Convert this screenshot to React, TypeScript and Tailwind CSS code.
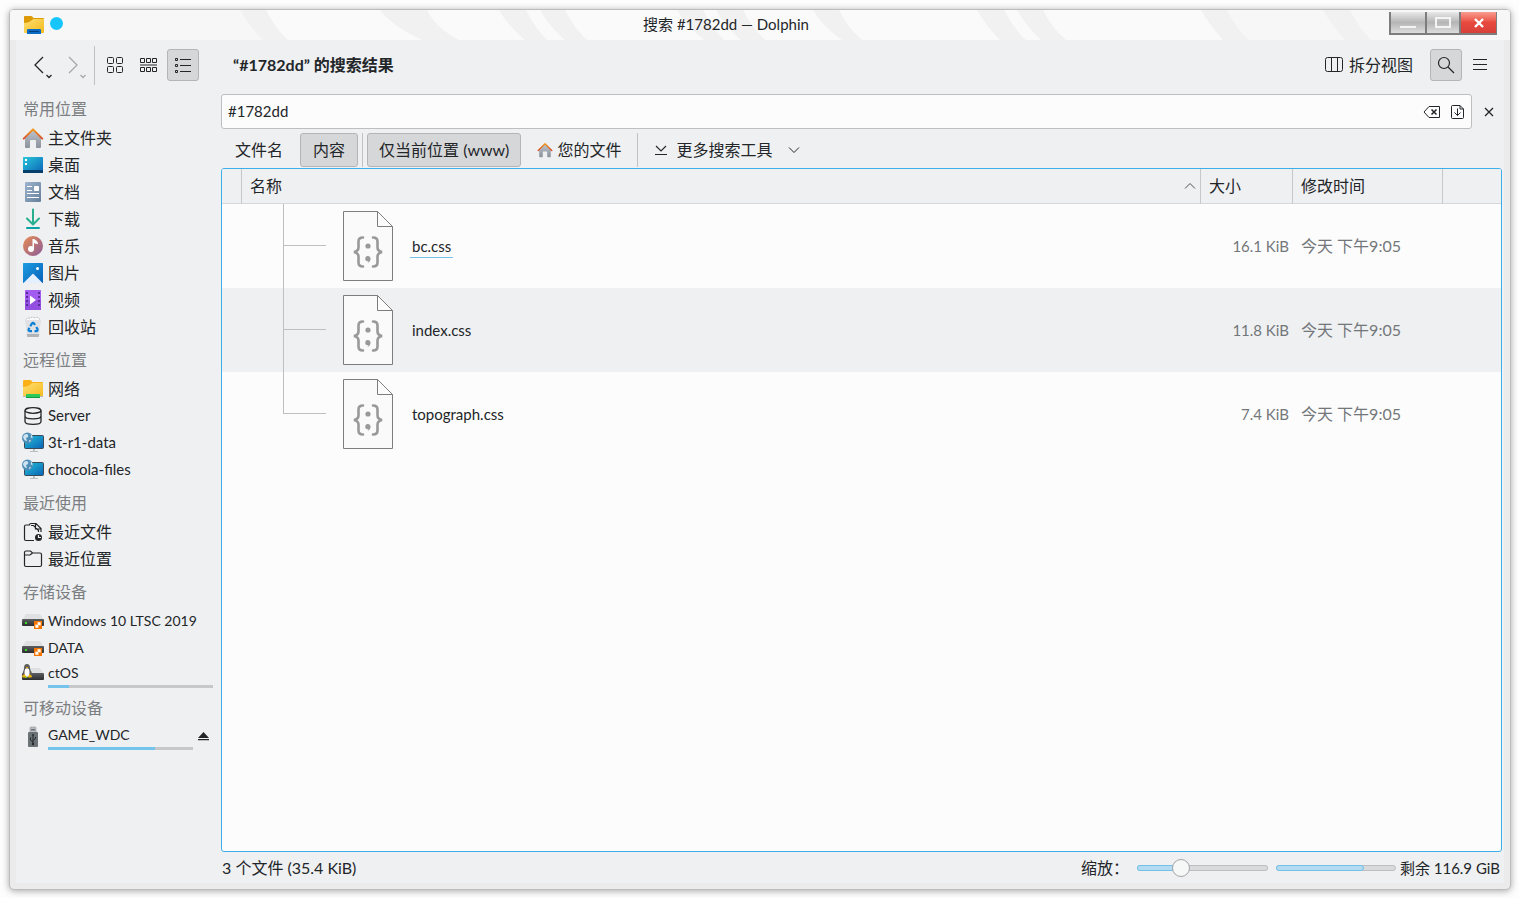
import { ReactNode, useState } from "react";
import clsx from "clsx";

const HomeIcon = ({ className = "size-[22px]" }: { className?: string }) => (
  <svg viewBox="0 0 22 22" className={className}>
    <defs>
      <linearGradient id="homeWall" x1="0" y1="0" x2="0" y2="1">
        <stop offset="0" stopColor="#bdc3cc" />
        <stop offset="1" stopColor="#8b929d" />
      </linearGradient>
      <linearGradient id="homeRoof" x1="0" y1="0" x2="0" y2="1">
        <stop offset="0" stopColor="#f09a1a" />
        <stop offset="1" stopColor="#d9512c" />
      </linearGradient>
    </defs>
    <path d="M11 3 3 11v9q0 1 1 1h3q1 0 1-1v-6q0-1 1-1h4q1 0 1 1v6q0 1 1 1h3q1 0 1-1v-9z" fill="url(#homeWall)" />
    <path d="M1.7 11.6 11 2.4l9.3 9.2" fill="none" stroke="url(#homeRoof)" strokeWidth="2" strokeLinecap="round" strokeLinejoin="round" />
  </svg>
);

const DesktopIcon = () => (
  <svg viewBox="0 0 22 22" className="size-[22px]">
    <defs>
      <linearGradient id="desk" x1="0" y1="0" x2="1" y2="1">
        <stop offset="0" stopColor="#2ac6da" />
        <stop offset="1" stopColor="#0a64b8" />
      </linearGradient>
    </defs>
    <rect x="1" y="3" width="20" height="16" rx=".5" fill="url(#desk)" />
    <path d="M1 16h20v3H1z" fill="#053f6b" />
    <path d="M3 5h2v2H3zM3 9h2v2H3z" fill="#fff" />
  </svg>
);

const DocumentIcon = () => (
  <svg viewBox="0 0 22 22" className="size-[22px]">
    <defs>
      <linearGradient id="doc" x1="0" y1="0" x2="1" y2="1">
        <stop offset="0" stopColor="#9fb4cd" />
        <stop offset="1" stopColor="#647f9c" />
      </linearGradient>
    </defs>
    <rect x="3" y="1" width="16" height="20" rx="1" fill="url(#doc)" />
    <path d="M5 5.500h5M5 9.500h5M5 12.500h12M5 16.500h12" stroke="#fff" />
    <rect x="12" y="5" width="5" height="5" rx=".7" fill="#fff" />
  </svg>
);

const DownloadIcon = () => (
  <svg viewBox="0 0 22 22" className="size-[22px]" fill="none" strokeWidth="2" strokeLinecap="round">
    <path d="M11 1.500v14M5 10.500l6 6 6-6" stroke="#27ae8e" strokeLinejoin="round" />
    <path d="M5 20h12" stroke="#0aa3a3" />
  </svg>
);

const MusicIcon = () => (
  <svg viewBox="0 0 22 22" className="size-[22px]">
    <defs>
      <linearGradient id="music" x1="0" y1="0" x2="1" y2="1">
        <stop offset="0" stopColor="#ea8c50" />
        <stop offset="1" stopColor="#8a5c9c" />
      </linearGradient>
    </defs>
    <circle cx="11" cy="11" r="10" fill="url(#music)" />
    <circle cx="9" cy="14" r="3" fill="#fff" />
    <path d="M10.500 4v10H12V8c1.500 1 3 1 4 1.200C16 7 14.500 5 12 4z" fill="#fff" />
  </svg>
);

const PictureIcon = () => (
  <svg viewBox="0 0 22 22" className="size-[22px]">
    <defs>
      <linearGradient id="pic" x1="0" y1="0" x2="1" y2="1">
        <stop offset="0" stopColor="#1f9de2" />
        <stop offset="1" stopColor="#0660b8" />
      </linearGradient>
    </defs>
    <rect x="1" y="1" width="20" height="20" rx=".5" fill="url(#pic)" />
    <path d="m1.500 21 9-9q.5-.4 1 0l9 9z" fill="#e4efff" />
    <circle cx="15.500" cy="6.500" r="1.500" fill="#fff" />
  </svg>
);

const VideoIcon = () => (
  <svg viewBox="0 0 22 22" className="size-[22px]">
    <rect x="3" y="1" width="16" height="20" rx=".5" fill="#a35cf0" />
    <path d="M3 11h16v10H3z" fill="#9350e0" />
    <path d="M4 3h2v2H4zM4 7h2v2H4zM4 11h2v2H4zM4 15h2v2H4zM16 3h2v2h-2zM16 7h2v2h-2zM16 11h2v2h-2zM16 15h2v2h-2z" fill="#5a2d9a" />
    <path d="M8 6.500v9l6-4.500z" fill="#fff" />
  </svg>
);

const TrashIcon = () => (
  <svg viewBox="0 0 22 22" className="size-[22px]">
    <path d="M3 4h16l-2 16H5z" fill="#dfe1e4" />
    <path d="M4.800 18h12.400l-.4 3H5.200z" fill="#b0b4b8" />
    <path d="M4 3.500 6 1.500l2 1 2-1.500 3 1 2-1 3 2.500" fill="#fff" stroke="#b8bbbf" strokeDasharray="2 1" />
    <g fill="none" stroke="#0a7fd8" strokeWidth="2.200">
      <path d="m8.300 10.300 1.500-2.600q1.200-1.500 2.400 0l.8 1.300" />
      <path d="m14.300 11 1.200 2.200q.4 1.800-1.300 2h-1.700" />
      <path d="M10 15.200H7.800q-1.800-.3-1.100-2l.8-1.400" />
    </g>
  </svg>
);

// folder with a coloured plate below it, blue for the app and green for the network
const FolderIcon = ({ network }: { network?: boolean }) => (
  <svg viewBox="0 0 22 22" className="size-[22px]">
    <defs>
      <linearGradient id="folder" x1="0" y1="0" x2="1" y2="1">
        <stop offset="0" stopColor="#ffdf72" />
        <stop offset="1" stopColor="#f4b91c" />
      </linearGradient>
    </defs>
    <path d="M1 3q0-1 1-1h6q1 0 1.500.8L10.500 4H20q1 0 1 1v5H1z" fill={network ? "#fbb117" : "#dc9a06"} />
    <path d="M1 9q5 0 8-3 1-1 2-1h10v13q0 1-1 1H2q-1 0-1-1z" fill="url(#folder)" />
    {network ? (
      <>
        <path d="M1 18.500h20" stroke="#b5babd" />
        <rect x="4" y="16" width="14" height="4" rx="1" fill="#2bc95a" />
        <path d="M4 19.500h14" stroke="#159a3c" />
      </>
    ) : (
      <>
        <path d="M4 16q0-1 1-1h12q1 0 1 1v4H4z" fill="#0b6cc4" />
        <path d="M6 17.500h10" stroke="#053f80" />
      </>
    )}
  </svg>
);

const DatabaseIcon = () => (
  <svg viewBox="0 0 22 22" className="size-[22px]" fill="none" stroke="#232629" strokeWidth="1.300">
    <ellipse cx="11" cy="5.500" rx="8" ry="2.800" />
    <path d="M3 5.500v11c0 3.800 16 3.800 16 0v-11M3 11c0 3.800 16 3.800 16 0" />
  </svg>
);

const RemoteIcon = () => (
  <svg viewBox="0 0 22 22" className="size-[22px]">
    <defs>
      <linearGradient id="remote" x1="0" y1="0" x2="1" y2="1">
        <stop offset="0" stopColor="#22c3d8" />
        <stop offset="1" stopColor="#0a61b6" />
      </linearGradient>
    </defs>
    <rect x="2.500" y="3.500" width="19" height="13" rx="1" fill="url(#remote)" stroke="#3b4a58" />
    <path d="M11 17h2v2h3v1H8v-1h3z" fill="#b9bec2" />
    <circle cx="5.500" cy="6" r="5.500" fill="#4d8fb8" />
    <path d="M2 3q3-2 4 0t-2 3l1 3Q2 9 1 5zM8 1.500q2 2 .5 3.500l2 1.500Q11 4 9 2zM7 8l2 .5-1.500 2z" fill="#cfe4ee" />
  </svg>
);

const RecentFilesIcon = () => (
  <svg viewBox="0 0 22 22" className="size-[22px]" fill="none" stroke="#232629" strokeWidth="1.200">
    <path d="M12 19.500H4q-1.500 0-1.500-1.500V5.500Q2.500 4 4 4h4" />
    <path d="M7.500 4Q7.500 2.500 9 2.500h5l5 5V11M13.500 3v5h5.500M9 4.500h2.500l5 5V11" />
    <circle cx="16.500" cy="16.500" r="3.500" fill="#232629" stroke="none" />
    <path d="M16.500 14v2.500H19" stroke="#eff0f1" />
  </svg>
);

const RecentPlacesIcon = () => (
  <svg viewBox="0 0 22 22" className="size-[22px]" fill="none" stroke="#232629" strokeWidth="1.200">
    <path d="M2.500 4.500q0-1.500 1.500-1.500h4.500l2 2H18q1.500 0 1.500 1.500V17q0 1.500-1.500 1.500H4q-1.500 0-1.500-1.500zM2.500 7H8l2.500-2" />
  </svg>
);

const DriveIcon = ({ kind }: { kind: "link" | "linux" }) => (
  <svg viewBox="0 0 22 22" className="size-[22px]">
    <defs>
      <linearGradient id="drive" x1="0" y1="0" x2="0" y2="1">
        <stop offset="0" stopColor="#5c5f62" />
        <stop offset="1" stopColor="#2b2d2f" />
      </linearGradient>
    </defs>
    <path d="M4 4h14l4 6H0z" fill="#dfe0e2" />
    <rect x="0" y="9" width="22" height="7" rx="1" fill="url(#drive)" />
    <path d="M3 12h2v2H3z" fill="#33e01c" />
    {kind === "link" ? (
      <>
        <rect x="12" y="11" width="8" height="8" fill="#f67400" />
        <path d="m14 17 4-4M15.500 13H18v2.500M14 14.500V17h2.500" fill="none" stroke="#fff" strokeWidth="1.300" />
      </>
    ) : (
      <>
        <path d="M2 4q0-4 3-4t3 4q0 2 1.500 4 1 4-1.500 5H2.500q-2.500-1-1.500-5Q2 6 2 4z" fill="#5b5b58" />
        <ellipse cx="5" cy="8.500" rx="2.500" ry="4.300" fill="#fff" />
        <path d="m3.700 3.500 1.300-.7 1.300.7L5 4.500z" fill="#e9a800" />
        <path d="m0 12 2.500-2 2 3.500h-4zM10 12l-2.500-2-2 3.500h4z" fill="#eab308" />
      </>
    )}
  </svg>
);

const UsbIcon = () => (
  <svg viewBox="0 0 22 22" className="size-[22px]">
    <rect x="8" y="1" width="6" height="6" rx="1" fill="#b9bdc1" stroke="#8c9094" strokeWidth=".6" />
    <path d="M9.500 3h1v1.500h-1zM11.500 3h1v1.500h-1z" fill="#232629" />
    <rect x="6" y="6" width="10" height="15" rx="1" fill="#6b7276" />
    <path d="M11 8.500v9.500M11 16l-2.500-2v-2.500M11 14.500l2.500-2v-1.500" fill="none" stroke="#23282b" />
    <path d="M11 7.500 9.800 9.500h2.400z" fill="#23282b" />
    <circle cx="11" cy="18" r="1.200" fill="#23282b" />
  </svg>
);

const CssFileIcon = () => (
  <svg viewBox="0 0 50 70" className="h-[70px] w-[50px] shrink-0" fill="none">
    <path d="M.5.500h34l15 15v54H.5z" fill="#fafafa" stroke="#7d7d7d" />
    <path d="M34.500.500v15h15z" fill="#fcfcfc" stroke="#7d7d7d" />
    <g stroke="#999" strokeWidth="2.600" strokeLinecap="round">
      <path d="M20 26.500q-4.500 0-4.500 4v6q0 3.500-4.500 4.500 4.500 1 4.500 4.500v6q0 4 4.500 4" />
      <path d="M30 26.500q4.500 0 4.500 4v6q0 3.500 4.500 4.500-4.500 1-4.500 4.500v6q0 4-4.500 4" />
    </g>
    <circle cx="25" cy="35" r="2.600" fill="#999" />
    <path d="M25 45a2.600 2.600 0 1 0-.3 5.200q.6 0 .8-.2-.2 1.200-1 2 3-1.200 3.100-4.500A2.600 2.600 0 0 0 25 45z" fill="#999" />
  </svg>
);

type Place = { name: string; icon: ReactNode; used?: number; eject?: boolean };

const places: { title: string; devices?: boolean; items: Place[] }[] = [
  {
    title: "常用位置",
    items: [
      { name: "主文件夹", icon: <HomeIcon /> },
      { name: "桌面", icon: <DesktopIcon /> },
      { name: "文档", icon: <DocumentIcon /> },
      { name: "下载", icon: <DownloadIcon /> },
      { name: "音乐", icon: <MusicIcon /> },
      { name: "图片", icon: <PictureIcon /> },
      { name: "视频", icon: <VideoIcon /> },
      { name: "回收站", icon: <TrashIcon /> },
    ],
  },
  {
    title: "远程位置",
    items: [
      { name: "网络", icon: <FolderIcon network /> },
      { name: "Server", icon: <DatabaseIcon /> },
      { name: "3t-r1-data", icon: <RemoteIcon /> },
      { name: "chocola-files", icon: <RemoteIcon /> },
    ],
  },
  {
    title: "最近使用",
    items: [
      { name: "最近文件", icon: <RecentFilesIcon /> },
      { name: "最近位置", icon: <RecentPlacesIcon /> },
    ],
  },
  {
    title: "存储设备",
    devices: true,
    items: [
      { name: "Windows 10 LTSC 2019", icon: <DriveIcon kind="link" /> },
      { name: "DATA", icon: <DriveIcon kind="link" /> },
      { name: "ctOS", icon: <DriveIcon kind="linux" />, used: 13 },
    ],
  },
  {
    title: "可移动设备",
    devices: true,
    items: [{ name: "GAME_WDC", icon: <UsbIcon />, used: 74, eject: true }],
  },
];

const files = [
  { name: "bc.css", size: "16.1 KiB", time: "今天 下午9:05" },
  { name: "index.css", size: "11.8 KiB", time: "今天 下午9:05" },
  { name: "topograph.css", size: "7.4 KiB", time: "今天 下午9:05" },
];

const isLatin = (s: string) => /^[\x20-\x7e]+$/.test(s);

function TitleBar() {
  return (
    <header className="relative flex h-[30px] shrink-0 items-center overflow-hidden rounded-t bg-[#fafafa] pr-[13px] pl-[13px]">
      <svg viewBox="0 0 1500 30" preserveAspectRatio="none" className="absolute inset-0 h-full w-full" fill="#f1f1f1">
        <path d="M0 0h230q12 16 23 30H0z" fill="#f7f7f7" />
        <path d="M1217 0h283v30h-261Q1226 16 1217 0z" fill="#f7f7f7" />
        <path d="M230 0h26q9 18 22 30h-25Q239 16 230 0zM370 0h47q9 18 32 30h-37Q382 16 370 0zM489 0h27q9 18 21 30h-22Q498 16 489 0zM530 0h25q9 18 22 30h-22Q539 16 530 0zM667 0h26q9 18 21 30h-20Q676 16 667 0zM706 0h27q9 18 22 30h-24Q715 16 706 0zM803 0h26q9 18 23 30h-20Q812 16 803 0zM967 0h27q9 18 22 30h-26Q976 16 967 0zM1007 0h26q9 18 23 30h-25Q1016 16 1007 0zM1191 0h26q9 18 22 30h-26Q1200 16 1191 0zM1313 0h27q9 18 21 30h-26Q1322 16 1313 0z" />
      </svg>
      <span className="relative">
        <FolderIcon />
      </span>
      <span className="relative mb-1 ml-[5px] size-[13px] rounded-full bg-[#16c5fb]" />
      <h1 className="relative flex-1 pb-[2px] text-center text-[15px]">搜索 #1782dd — Dolphin</h1>
      <div className="relative mb-[5px] flex h-[23px] self-end border-b-2 border-l-2 border-[#7d7d7d]">
        <button aria-label="最小化" className="flex w-9 items-end justify-center border-r-2 border-[#7d7d7d] bg-linear-to-b from-[#e8e8e8] via-[#b5b5b5] to-[#ddd] pb-[5px]">
          <span className="h-[2px] w-4 bg-[#f4f4f4]" />
        </button>
        <button aria-label="最大化" className="flex w-[34px] items-center justify-center border-r-2 border-[#7d7d7d] bg-linear-to-b from-[#e8e8e8] via-[#b5b5b5] to-[#ddd]">
          <span className="h-[11px] w-4 border-2 border-[#f4f4f4]" />
        </button>
        <button aria-label="关闭" className="flex w-9 items-center justify-center border-r border-[#7d7d7d] bg-linear-to-b from-[#f99a90] via-[#e8493e] to-[#d8403a]">
          <svg viewBox="0 0 10 10" className="size-[10px]" stroke="#fff" strokeWidth="2.400">
            <path d="m1 1 8 8M9 1 1 9" />
          </svg>
        </button>
      </div>
    </header>
  );
}

function Toolbar() {
  return (
    <div className="flex h-[50px] shrink-0 items-center pr-[6px] pl-2">
      <button aria-label="后退">
        <svg viewBox="0 0 34 32" className="h-8 w-[34px]" fill="none" stroke="#232629" strokeWidth="1.300">
          <path d="m19 8-8 8 8 8M22.500 26l2.500 2.500 2.500-2.500" />
        </svg>
      </button>
      <button aria-label="前进" disabled>
        <svg viewBox="0 0 34 32" className="h-8 w-[34px]" fill="none" stroke="#a6a8aa" strokeWidth="1.300">
          <path d="m11 8 8 8-8 8M22.500 26l2.500 2.500 2.500-2.500" />
        </svg>
      </button>
      <span className="mr-1 ml-[2px] h-[39px] w-px bg-[#bfc1c3]" />
      <div className="flex gap-[2px]">
        <button aria-label="图标" className="flex size-8 items-center justify-center">
          <svg viewBox="0 0 16 16" className="size-4" fill="none" stroke="#232629">
            <rect x=".5" y=".5" width="6" height="6" rx="1" />
            <rect x="9.500" y=".5" width="6" height="6" rx="1" />
            <rect x=".5" y="9.500" width="6" height="6" rx="1" />
            <rect x="9.500" y="9.500" width="6" height="6" rx="1" />
          </svg>
        </button>
        <button aria-label="紧凑" className="flex size-8 items-center justify-center">
          <svg viewBox="0 0 18 16" className="h-4 w-[18px]" fill="none" stroke="#232629">
            <path d="M.5 1.500h4v4h-4zM6.500 1.500h4v4h-4zM12.500 1.500h4v4h-4zM.5 10.500h4v4h-4zM6.500 10.500h4v4h-4zM12.500 10.500h4v4h-4zM0 8h17" />
          </svg>
        </button>
        <button aria-label="详细信息" className="flex size-8 items-center justify-center rounded-[3px] border border-[#b3b5b7] bg-[#d6d7d9]">
          <svg viewBox="0 0 16 16" className="size-4" fill="none" stroke="#232629">
            <path d="M.5 1.500h2v2h-2zM.5 7.500h2v2h-2zM.5 13.500h2v2h-2zM5 2.500h11M5 8.500h11M5 14.500h11" />
          </svg>
        </button>
      </div>
      <h2 className="ml-[34px] flex-1 text-base font-bold">“#1782dd” 的搜索结果</h2>
      <button className="flex items-center gap-[6px] text-base">
        <svg viewBox="0 0 18 16" className="h-4 w-[18px]" fill="none" stroke="#232629">
          <rect x=".5" y=".5" width="17" height="14" rx="2" />
          <path d="M6.500 1v14M12.500 1v14" />
        </svg>
        拆分视图
      </button>
      <button aria-label="搜索" className="ml-[17px] flex size-8 items-center justify-center rounded-[3px] border border-[#b3b5b7] bg-[#d6d7d9]">
        <svg viewBox="0 0 18 18" className="size-[18px]" fill="none" stroke="#232629" strokeWidth="1.200">
          <circle cx="7" cy="7" r="5.500" />
          <path d="m11 11 6 6" />
        </svg>
      </button>
      <button aria-label="菜单" className="flex h-8 w-9 items-center justify-center">
        <svg viewBox="0 0 14 12" className="h-3 w-[14px]" stroke="#232629">
          <path d="M0 .5h14M0 5.500h14M0 10.500h14" />
        </svg>
      </button>
    </div>
  );
}

function Sidebar() {
  return (
    <nav className="-mt-px w-[205px] shrink-0 text-base">
      {places.map((group) => (
        <section key={group.title}>
          <h3 className="flex h-[35px] items-center pt-1 pl-[7px] text-[#7c7f82]">{group.title}</h3>
          <ul className={clsx(group.devices && "text-sm")}>
            {group.items.map((p) => (
              <li key={p.name} className="flex h-[27px] items-center pr-2 pl-[6px]">
                <a href="#" className="flex h-full min-w-0 flex-1 items-center gap-1">
                  {p.icon}
                  <span className={clsx("flex h-full flex-1 flex-col whitespace-nowrap", isLatin(p.name) && !group.devices && "text-[15px]")}>
                    <span className={p.used ? "leading-6" : "leading-[27px]"}>{p.name}</span>
                    {p.used && (
                      <span className="h-[3px] bg-[#c5c7c9]">
                        <span className="block h-full bg-[#74c4ee]" style={{ width: `${p.used}%` }} />
                      </span>
                    )}
                  </span>
                </a>
                {p.eject && (
                  <button aria-label="弹出" className="flex w-5 items-center justify-end pr-1">
                    <svg viewBox="0 0 11 9" className="h-[9px] w-[11px] shrink-0" fill="#232629">
                      <path d="M5.500 0 11 6H0zM0 7h11v1.200H0z" />
                    </svg>
                  </button>
                )}
              </li>
            ))}
          </ul>
        </section>
      ))}
    </nav>
  );
}

function SearchPanel() {
  const [query, setQuery] = useState("#1782dd");

  return (
    <div className="pt-1">
      <div className="flex items-center">
        <div className="flex h-[35px] flex-1 items-center gap-2 rounded-[3px] border border-[#bcbec0] bg-[#fcfcfc] pr-[6px] pl-[6px]">
          <input aria-label="搜索内容" value={query} onChange={(e) => setQuery(e.target.value)} className="min-w-0 flex-1 bg-transparent text-[15px] outline-none" />
          <button aria-label="清除" onClick={() => setQuery("")}>
            <svg viewBox="0 0 18 16" className="h-4 w-[18px]" fill="none" stroke="#232629">
              <path d="M1 8 6 2.500h10.500v11H6z" />
              <path d="m8.500 5.500 5 5M13.500 5.500l-5 5" strokeWidth="1.600" />
            </svg>
          </button>
          <button aria-label="保存搜索">
            <svg viewBox="0 0 16 16" className="size-4" fill="none" stroke="#232629">
              <path d="M11 1.500H3.500q-1 0-1 1v11q0 1 1 1h10q1 0 1-1V5L11 1.500V5h3.500M8.500 4.500v7M5.500 8.500l3 3 3-3" />
            </svg>
          </button>
        </div>
        <button aria-label="关闭搜索" className="flex w-[30px] justify-center pl-1">
          <svg viewBox="0 0 10 10" className="size-[10px]" stroke="#232629" strokeWidth="1.300">
            <path d="m1 1 8 8M9 1 1 9" />
          </svg>
        </button>
      </div>
      <div className="my-1 flex h-[34px] items-center text-base whitespace-nowrap">
        <button className="h-full px-[14px]">文件名</button>
        <button className="ml-[3px] h-full rounded-[3px] border border-[#b3b5b7] bg-[#d6d7d9] px-3">内容</button>
        <span className="mx-1 h-full w-px bg-[#bfc1c3]" />
        <button className="h-full rounded-[3px] border border-[#b3b5b7] bg-[#d6d7d9] px-[11px]">仅当前位置 (www)</button>
        <button className="flex h-full items-center gap-1 px-4">
          <HomeIcon className="size-4" />
          您的文件
        </button>
        <span className="h-full w-px bg-[#bfc1c3]" />
        <button className="flex h-full items-center gap-2 pl-4">
          <svg viewBox="0 0 14 14" className="size-[14px]" fill="none" stroke="#232629" strokeWidth="1.100">
            <path d="m2 3 5 5 5-5M1 11.500h12" />
          </svg>
          更多搜索工具
          <svg viewBox="0 0 12 8" className="ml-2 h-2 w-3" fill="none" stroke="#232629">
            <path d="m1 1.500 5 5 5-5" />
          </svg>
        </button>
      </div>
    </div>
  );
}

function FileTable() {
  return (
    <div className="-mt-[3px] min-h-0 flex-1 overflow-hidden rounded-[3px] border border-[#3daee9] bg-[#fcfcfc]">
      <table className="w-full table-fixed border-separate border-spacing-0 text-base">
        <thead>
          <tr className="h-[35px] bg-[#eff0f2] text-left [&>th]:border-b [&>th]:border-b-[#d5d7d8] [&>th]:py-0 [&>th]:font-normal">
            <th className="w-5 border-r border-r-[#c5c7c9]" />
            <th className="border-r border-r-[#c5c7c9] pr-1 pl-2">
              <div className="flex items-center justify-between">
                名称
                <svg viewBox="0 0 12 8" className="h-2 w-3" fill="none" stroke="#4c4f52">
                  <path d="m1 6.500 5-5 5 5" />
                </svg>
              </div>
            </th>
            <th className="w-[92px] border-r border-r-[#c5c7c9] pl-2">大小</th>
            <th className="w-[150px] border-r border-r-[#c5c7c9] pl-2">修改时间</th>
            <th className="w-[58px]" />
          </tr>
        </thead>
        <tbody>
          {files.map((f, i) => (
            <tr key={f.name} className="h-[84px] odd:bg-[#fcfcfc] even:bg-[#eff0f2] [&>td]:p-0">
              <td />
              <td>
                <div className="flex h-[84px] items-center pl-[41px]">
                  <div className="h-full w-[43px]">
                    <div className="h-[42px] border-b border-l border-[#bdbfc1]" />
                    {i < files.length - 1 && <div className="h-[42px] border-l border-[#bdbfc1]" />}
                  </div>
                  <span className="ml-[17px]">
                    <CssFileIcon />
                  </span>
                  <span className={clsx("ml-[17px] border-b px-[2px] text-[15px] leading-[22px]", i === 0 ? "border-[#74c0e8]" : "border-transparent")}>{f.name}</span>
                </div>
              </td>
              <td className="text-right text-[15px] text-[#73777a]">
                <div className="pr-1">{f.size}</div>
              </td>
              <td className="text-[#73777a]">
                <div className="pl-2">{f.time}</div>
              </td>
              <td />
            </tr>
          ))}
        </tbody>
      </table>
    </div>
  );
}

function StatusBar() {
  const [zoom, setZoom] = useState(31);
  const track = {
    background: `linear-gradient(90deg, #b3dcf2 ${zoom}%, #d9dadb ${zoom}%) padding-box, linear-gradient(90deg, #74c0e8 ${zoom}%, #bcbebf ${zoom}%) border-box`,
  };

  return (
    <footer className="flex h-[31px] shrink-0 items-center pt-px pr-[2px] pl-px text-base whitespace-nowrap">
      <span className="flex-1">3 个文件 (35.4 KiB)</span>
      <label htmlFor="zoom">缩放：</label>
      <input
        id="zoom"
        type="range"
        value={zoom}
        onChange={(e) => setZoom(Number(e.target.value))}
        style={track}
        className="ml-2 h-[6px] w-[131px] appearance-none rounded-full border border-transparent [&::-webkit-slider-thumb]:size-[18px] [&::-webkit-slider-thumb]:appearance-none [&::-webkit-slider-thumb]:rounded-full [&::-webkit-slider-thumb]:border [&::-webkit-slider-thumb]:border-[#a3a5a7] [&::-webkit-slider-thumb]:bg-[#f6f7f7]"
      />
      <div className="mr-1 ml-2 h-[6px] w-[120px] rounded-full border border-[#bcbebf] bg-[#d9dadb]">
        <div className="-mt-px -ml-px h-[6px] w-[88px] rounded-full border border-[#74c0e8] bg-[#b3dcf2]" />
      </div>
      <span className="text-[15px]">剩余 116.9 GiB</span>
    </footer>
  );
}

export default function App() {
  return (
    <div className="h-screen bg-[#fdfdfd] pt-[9px] pr-2 pb-2 pl-[9px] font-['Lato','Noto_Sans_CJK_SC',sans-serif] text-[#232629]">
      <div className="flex h-full flex-col rounded-[5px] border border-[#bdbdbd] bg-[#ebebec] shadow-[0_1px_7px_rgba(0,0,0,0.35)]">
        <TitleBar />
        <div className="mx-[6px] mb-[6px] flex min-h-0 flex-1 flex-col bg-[#eff0f2]">
          <Toolbar />
          <div className="flex min-h-0 flex-1 pr-[2px]">
            <Sidebar />
            <main className="flex min-w-0 flex-1 flex-col">
              <SearchPanel />
              <FileTable />
              <StatusBar />
            </main>
          </div>
        </div>
      </div>
    </div>
  );
}
